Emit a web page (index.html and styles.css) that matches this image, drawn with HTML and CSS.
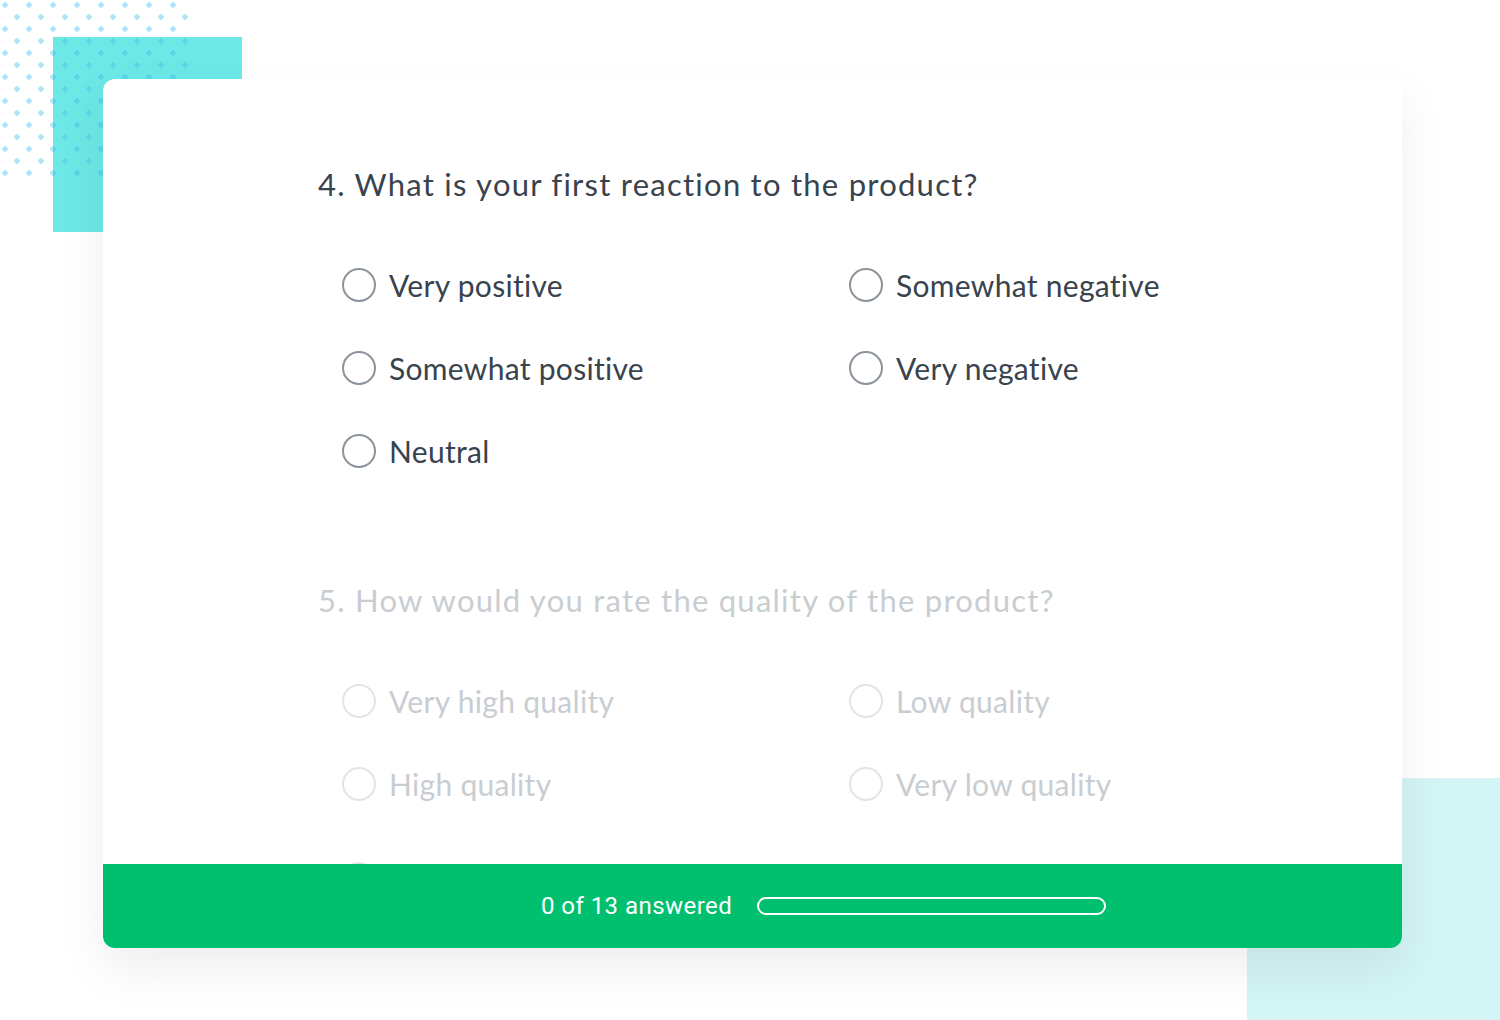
FILE: index.html
```html
<!DOCTYPE html>
<html lang="en">
<head>
  <meta charset="UTF-8" />
  <meta name="viewport" content="width=device-width, initial-scale=1.0"/>
  <title>Survey</title>
  <link rel="stylesheet" href="styles.css">
</head>
<body>
  <div class="stage">
    <div class="deco deco-teal"></div>
    <div class="deco deco-dots"></div>
    <div class="deco deco-mint"></div>

    <main class="survey">
      <div class="questions">
        <section class="question">
          <h2>4. What is your first reaction to the product?</h2>
          <ul class="options">
            <li><span class="radio"></span>Very positive</li>
            <li><span class="radio"></span>Somewhat positive</li>
            <li><span class="radio"></span>Neutral</li>
            <li><span class="radio"></span>Somewhat negative</li>
            <li><span class="radio"></span>Very negative</li>
          </ul>
        </section>

        <section class="question faded">
          <h2>5. How would you rate the quality of the product?</h2>
          <ul class="options">
            <li><span class="radio"></span>Very high quality</li>
            <li><span class="radio"></span>High quality</li>
            <li class="peek"><span class="radio"></span>Neither high nor low quality</li>
            <li><span class="radio"></span>Low quality</li>
            <li><span class="radio"></span>Very low quality</li>
          </ul>
        </section>
      </div>

      <footer class="progress">
        <span class="progress-label">0 of 13 answered</span>
        <div class="progress-bar"></div>
      </footer>
    </main>
  </div>
</body>
</html>
```

FILE: styles.css
```css
body {
  margin: 0;
  background: #fff;
  font-family: Lato, "Open Sans", sans-serif;
  color: #333e48;
}

.stage {
  position: relative;
  width: 1500px;
  height: 1020px;
  overflow: hidden;
  padding: 79px 0 0 103px;
  box-sizing: border-box;
}

/* background decorations */
.deco {
  position: absolute;
}

.deco-teal {
  left: 53px;
  top: 37px;
  width: 189px;
  height: 195px;
  background: #6de8e6;
}

.deco-dots {
  left: 0;
  top: 0;
  width: 192px;
  height: 180px;
  background-image:
    radial-gradient(circle, rgba(60, 190, 230, 0.4) 2.5px, transparent 3px),
    radial-gradient(circle, rgba(60, 190, 230, 0.4) 2.5px, transparent 3px);
  background-size: 24px 24px;
  background-position: -7px -7px, 5px 5px;
}

.deco-mint {
  left: 1247px;
  top: 778px;
  width: 253px;
  height: 242px;
  background: #d4f5f5;
}

/* card */
.survey {
  position: relative;
  width: 1299px;
  height: 869px;
  background: #fff;
  border-radius: 12px;
  box-shadow: 0 20px 50px rgba(0, 0, 0, 0.07);
  display: flex;
  flex-direction: column;
  overflow: hidden;
}

.questions {
  flex: 1;
  overflow: hidden;
  padding: 85px 0 0 215px;
}

.question + .question {
  margin-top: 88px;
}

.question h2 {
  margin: 0;
  font-size: 31px;
  font-weight: 400;
  letter-spacing: 1.25px;
  line-height: 40px;
  color: #38434d;
}

.options {
  list-style: none;
  margin: 39px 0 0 24px;
  padding: 0;
  display: grid;
  grid-template-columns: 507px 507px;
  grid-template-rows: repeat(3, 83px);
  grid-auto-flow: column;
}

.options li {
  display: flex;
  align-items: center;
  gap: 13px;
  font-size: 30px;
  font-weight: 400;
  letter-spacing: 0.3px;
  color: #38434d;
}

.options li.peek {
  padding-top: 24px;
}

.radio {
  width: 34px;
  height: 34px;
  box-sizing: border-box;
  border: 2px solid #8c939a;
  border-radius: 50%;
  flex: none;
}

.faded h2,
.faded .options li {
  color: #c8cdd2;
}

.faded .radio {
  border-color: #e2e5e8;
}

/* footer */
.progress {
  flex: none;
  height: 84px;
  background: #00bf6f;
  display: flex;
  align-items: center;
  gap: 25px;
  padding-left: 438px;
  color: #fff;
  font-family: Roboto, sans-serif;
  font-size: 24px;
  font-weight: 400;
  letter-spacing: 0.45px;
}

.progress-bar {
  width: 349px;
  height: 18px;
  border: 2px solid #fff;
  border-radius: 9px;
  box-sizing: border-box;
}
```
